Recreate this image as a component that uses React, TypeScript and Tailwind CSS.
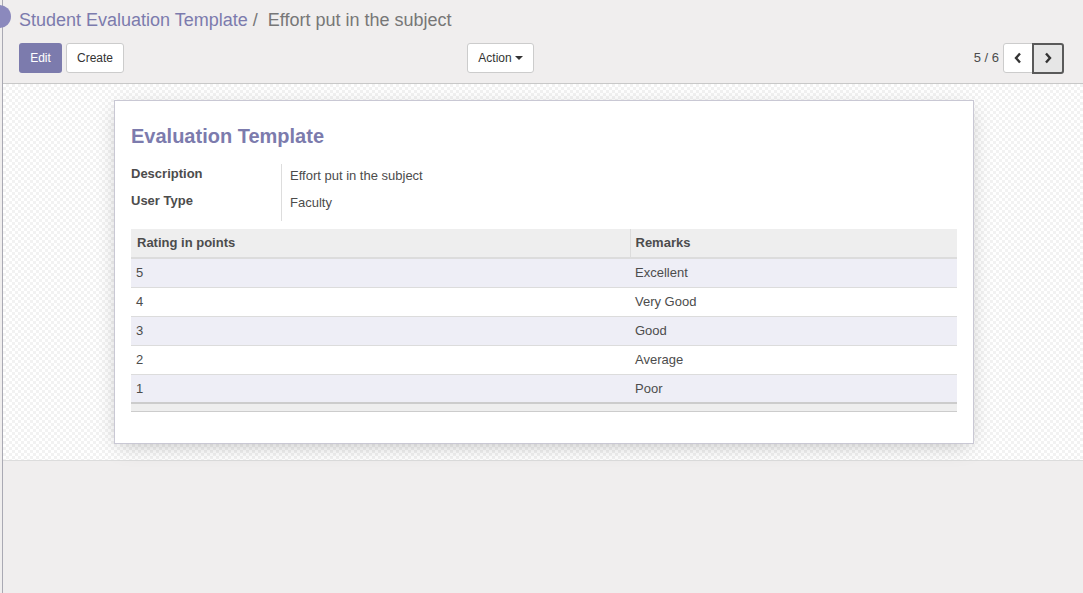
import React from "react";

const rows = [
  ["5", "Excellent"],
  ["4", "Very Good"],
  ["3", "Good"],
  ["2", "Average"],
  ["1", "Poor"],
];

export default function App() {
  return (
    <div className="relative h-[593px] w-[1083px] overflow-hidden bg-[#f0eeee] font-['Liberation_Sans',Arial,sans-serif] text-[#4c4c4c]">
      <div className="absolute left-[-12px] top-[5px] h-[23px] w-[23px] rounded-full bg-[#8b89bd] z-10" />
      <div className="ml-[2px] h-full border-l border-[#a9a9b3]">
        {/* control panel */}
        <div className="h-[84px] border-b border-[#c8c8c8] pl-[16px] pr-[19px]">
          <div className="flex h-[40px] items-center pt-[1px] text-[18px]">
            <span className="text-[#7c7bad]">Student Evaluation Template</span>
            <span className="ml-[5px] text-[#777]">/</span>
            <span className="ml-[10px] text-[#777]">Effort put in the subject</span>
          </div>
          <div className="mt-[3px] flex h-[30px] items-center text-[12px]">
            <div className="flex w-[448px] gap-[4px]">
              <button className="h-[30px] w-[43px] rounded-[3px] bg-[#7c7bad] text-white">Edit</button>
              <button className="h-[30px] w-[58px] rounded-[3px] border border-[#ccc] bg-white text-[#333]">Create</button>
            </div>
            <button className="flex h-[30px] w-[67px] items-center justify-center gap-[3px] rounded-[3px] border border-[#ccc] bg-white text-[#333]">
              Action
              <svg width="8" height="4" viewBox="0 0 8 4"><path d="M0 0h8L4 4z" fill="#333" /></svg>
            </button>
            <div className="ml-auto flex items-center">
              <span className="mr-[4px] text-[13px] text-[#4c4c4c]">5 / 6</span>
              <button className="flex h-[30px] w-[30px] items-center justify-center rounded-l-[3px] border border-[#ccc] bg-white">
                <svg width="8" height="12" viewBox="0 0 8 12"><path d="M6 1.5L2 6l4 4.5" stroke="#333" strokeWidth="2.4" fill="none" /></svg>
              </button>
              <button className="-ml-[1px] flex h-[31px] w-[32px] items-center justify-center rounded-r-[3px] border-2 border-[#5a5a5a] bg-[#e6e6e6]">
                <svg width="8" height="12" viewBox="0 0 8 12"><path d="M2 1.5L6 6l-4 4.5" stroke="#333" strokeWidth="2.4" fill="none" /></svg>
              </button>
            </div>
          </div>
        </div>
        {/* form content */}
        <div className="h-[377px] border-b border-[#dcdcdc] bg-[repeating-conic-gradient(#f2f2f2_0%_25%,#ffffff_0%_50%)] bg-[length:6px_6px] pt-[16px]">
          <div className="ml-[111px] h-[344px] w-[860px] border border-[#c9c8d4] bg-white px-[16px] pt-[21px] shadow-[0_5px_20px_-5px_rgba(0,0,0,0.25)]">
            <h1 className="text-[20px] font-bold leading-[28px] text-[#7c7bad]">Evaluation Template</h1>
            <div className="mt-[14px] flex text-[13px]">
              <div className="w-[151px] border-r border-[#ddd] pb-[3px]">
                <div className="h-[27px] font-bold">Description</div>
                <div className="h-[27px] font-bold">User Type</div>
              </div>
              <div className="pl-[8px] pt-[2px]">
                <div className="h-[27px]">Effort put in the subject</div>
                <div className="h-[27px]">Faculty</div>
              </div>
            </div>
            <table className="mt-[8px] w-full border-collapse text-[13px]">
              <thead>
                <tr className="h-[29px] border-b-2 border-[#dcdcdc] bg-[#eeeeee]">
                  <th className="w-[499px] border-r border-[#dcdcdc] pl-[6px] text-left font-bold">Rating in points</th>
                  <th className="pl-[5px] text-left font-bold">Remarks</th>
                </tr>
              </thead>
              <tbody>
                {rows.map((r, i) => (
                  <tr key={r[0]} className={`h-[29px] border-b border-[#dcdcdc] ${i % 2 === 0 ? "bg-[#eeeef6]" : "bg-white"}`}>
                    <td className="pl-[5px]">{r[0]}</td>
                    <td className="pl-[5px]">{r[1]}</td>
                  </tr>
                ))}
              </tbody>
              <tfoot>
                <tr className="h-[8px] border-t-2 border-b border-t-[#cccccc] border-b-[#cccccc] bg-[#eeeeee]">
                  <td />
                  <td />
                </tr>
              </tfoot>
            </table>
          </div>
        </div>
      </div>
    </div>
  );
}
